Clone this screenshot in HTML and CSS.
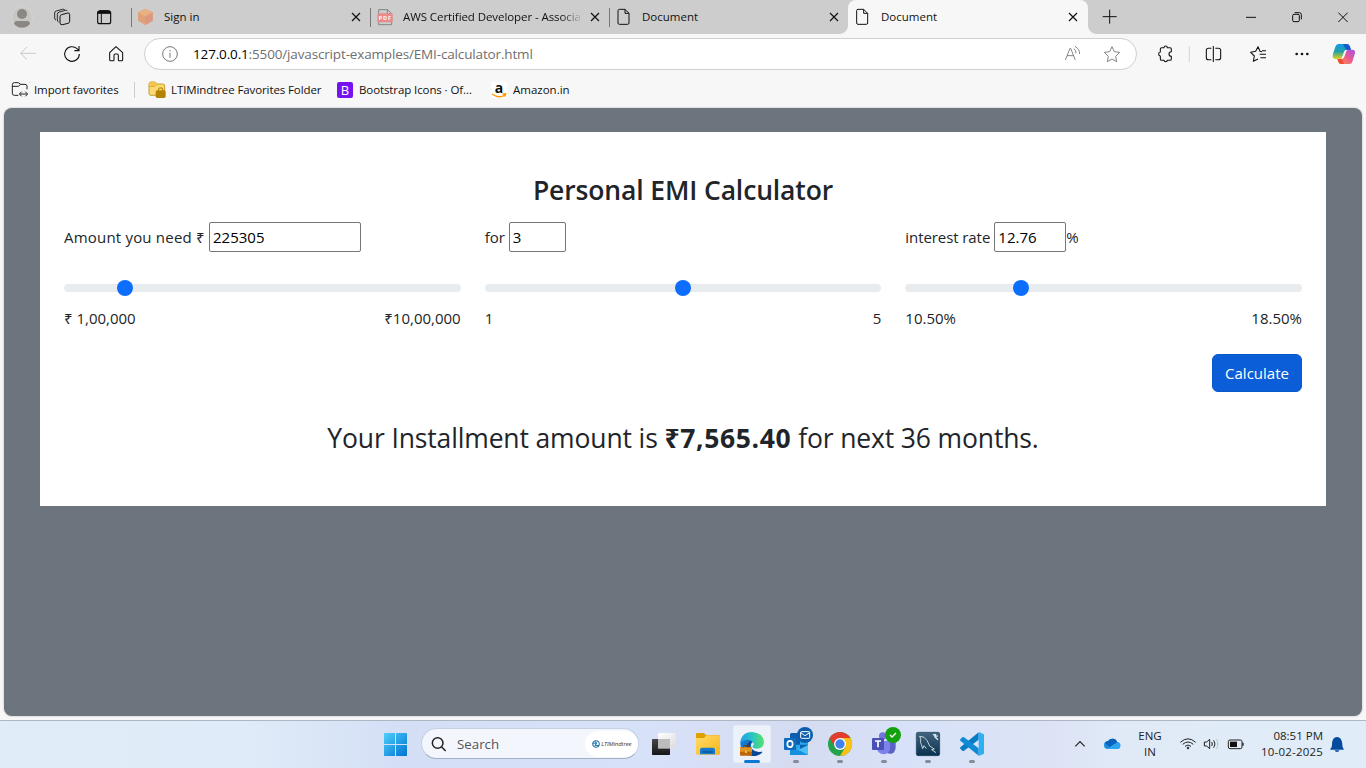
FILE: index.html
```html
<!DOCTYPE html>
<html lang="en">
<head>
<meta charset="utf-8">
<title>Document</title>
<link rel="stylesheet" href="styles.css">
</head>
<body>
<div class="browser">
  <div class="tabstrip">
    <svg class="strip-tools" viewBox="0 0 393 102" fill="none" stroke="#111" stroke-width="3">
      <circle cx="66" cy="51" r="31" fill="#c9c7c4" stroke="#dedad5" stroke-width="2"/>
      <circle cx="66" cy="42" r="15" fill="#8b8783" stroke="none"/>
      <path d="M42 72q0-9 9-9h30q9 0 9 9q-9 11-24 11t-24-11z" fill="#8b8783" stroke="none"/>
      <path d="M180 50q0-5 5-6l18-5q6-1 6 5v20q0 5-5 6l-16 4q-8 1-8-5z"/>
      <path d="M176 66q-4-1-4-6V43q0-5 6-7l18-5q5-1 6 2M168 60q-4-1-4-6V39q0-5 5-6l18-5q5-1 7 1" stroke-width="2.600"/>
      <rect x="293" y="33" width="39" height="38" rx="6" stroke-width="3.500"/>
      <path d="M293 40q0-8 7-8h25q7 0 7 8z" fill="#111"/><path d="M304 40v31"/>
    </svg>
    <div class="tab">
      <svg class="tab-icon" viewBox="413 24 54 54"><path d="M438 26l22 11v25l-22 13-22-13V37z" fill="#e0a07a"/><path d="M438 26l22 11-22 13-22-13z" fill="#e8b184"/><path d="M438 50l22-13v25l-22 13z" fill="#dc9880"/></svg>
      <span class="tab-title">Sign in</span>
      <svg class="close" viewBox="0 0 10 10"><path d="M1 1l8 8M9 1L1 9"/></svg>
    </div>
    <div class="tab">
      <svg class="tab-icon" viewBox="47 24 54 54" fill="none"><path d="M55 40V29h27l12 12v33H55V66" stroke="#858585" stroke-width="3"/><path d="M81 29v13h13" stroke="#858585" stroke-width="3"/><rect x="51" y="40" width="46" height="27" rx="2" fill="#ea8b8b"/><text x="55" y="60" class="pdf-text" textLength="37">PDF</text></svg>
      <span class="tab-title fade">AWS Certified Developer - Associa</span>
      <svg class="close" viewBox="0 0 10 10"><path d="M1 1l8 8M9 1L1 9"/></svg>
    </div>
    <div class="tab">
      <svg class="tab-icon" viewBox="767 24 54 54" fill="none" stroke="#111" stroke-width="3"><path d="M780 28h17l12 12v29q0 4-4 4h-25q-4 0-4-4V32q0-4 4-4zM797 28v12h12"/></svg>
      <span class="tab-title">Document</span>
      <svg class="close" viewBox="0 0 10 10"><path d="M1 1l8 8M9 1L1 9"/></svg>
    </div>
    <div class="tab active">
      <svg class="tab-icon" viewBox="344 24 54 54" fill="none" stroke="#111" stroke-width="3"><path d="M356 28h17l12 12v29q0 4-4 4h-25q-4 0-4-4V32q0-4 4-4zM373 28v12h12"/></svg>
      <span class="tab-title">Document</span>
      <svg class="close" viewBox="0 0 10 10"><path d="M1 1l8 8M9 1L1 9"/></svg>
    </div>
    <svg class="window-tools" viewBox="144 0 834 102" fill="none" stroke="#111" stroke-width="3">
      <path d="M188 50h42M209 29v42M618 52h30M895 38l28 28M923 38l-28 28"/>
      <rect x="758" y="43" width="20" height="22" rx="4"/><path d="M764 38h14q6 0 6 6v14"/>
    </svg>
  </div>

  <div class="toolbar">
    <svg class="tool" viewBox="18 102 132 120" fill="none" stroke="#c9c9c9" stroke-width="3"><path d="M62 160h45M81 141l-19 19 19 19"/></svg>
    <svg class="tool" viewBox="150 102 132 120" fill="none" stroke="#111" stroke-width="3.300"><path d="M238 162a22 22 0 1 1-7-16l6 5M237 138v14h-14"/></svg>
    <svg class="tool" viewBox="282 102 132 120" fill="none" stroke="#111" stroke-width="3.200" stroke-linejoin="round"><path d="M329 158l19-18 20 18v21q0 3-3 3h-8q-2 0-2-3v-13q0-4-4-4h-5q-4 0-4 4v13q0 3-2 3h-8q-3 0-3-3z"/></svg>
    <div class="address">
      <svg class="info" viewBox="486 138 48 48" fill="none" stroke="#777" stroke-width="3"><circle cx="510" cy="162" r="22"/><path d="M510 158v15M510 150v4"/></svg>
      <span class="url"><b>127.0.0.1</b>:5500/javascript-examples/EMI-calculator.html</span>
      <svg class="address-tools" viewBox="60 117 210 90" fill="none" stroke="#777" stroke-width="2.700"><path d="M76 180l14-35h2l14 35M81 167h21M102 146q6 5 6 14M105 139q14 8 14 23"/><path stroke-linejoin="round" d="M216 140l7 15 16 2-12 12 3 16-14-8-14 8 3-16-12-12 16-2z"/></svg>
    </div>
    <svg class="right-tools" viewBox="291 102 687 120" fill="none" stroke="#111" stroke-width="3.200" stroke-linejoin="round">
      <path d="M365 143h7q0-5 5-5t5 5h8q4 0 4 4v8q-7 0-7 7t7 7v8q0 4-4 4h-8q0 4-5 4t-5-4h-7q-4 0-4-4v-9q-5 0-5-6t5-6v-9q0-4 4-4z"/>
      <path d="M448 138v48" stroke="#ccc" stroke-width="2.500"/>
      <path d="M514 145h-9q-6 0-6 6v22q0 6 6 6h9M520 138v48M526 145h9q7 0 7 6v22q0 6-7 6h-9"/>
      <path d="M678 163h-19M678 152h-12M678 173h-17M666 155l-6-1-6-14-7 14-15 3 11 11-3 16 14-7"/>
      <g fill="#111" stroke="none"><circle cx="770" cy="162" r="4"/><circle cx="786" cy="162" r="4"/><circle cx="802" cy="162" r="4"/></g>
      <g stroke="none">
        <defs>
          <linearGradient id="cpa" x1="0" y1="0" x2="0" y2="1"><stop offset="0" stop-color="#1597ed"/><stop offset=".5" stop-color="#20a2a4"/><stop offset="1" stop-color="#e4d31c"/></linearGradient>
          <linearGradient id="cpb" x1="1" y1="0" x2="0" y2="1"><stop offset="0" stop-color="#a44df5"/><stop offset=".5" stop-color="#f05b8b"/><stop offset="1" stop-color="#ff9b45"/></linearGradient>
        </defs>
        <path d="M896 132h24q8 0 10 8l3 9h-12q-7 0-9 7l-5 14q-2 7-9 7h-12q-11-1-7-15l7-22q3-8 9-8z" fill="url(#cpa)"/>
        <path d="M909 132h11q8 0 10 8l3 10h-10q-6 0-8-7z" fill="#1659cc"/>
        <path d="M928 192h-24q-7 0-9-7l-3-8h9q8 0 10-7l6-14q2-7 9-7h12q10 1 6 14l-7 22q-2 7-9 7z" fill="url(#cpb)"/>
        <path d="M892 177h9q6 0 8 6l3 9h-8q-7 0-9-7z" fill="#ef4b35"/>
        <path d="M913 155q2-5 7-5l-7 20q-2 6-8 6z" fill="#f7f7f7"/>
      </g>
    </svg>
  </div>

  <div class="favorites">
    <div class="fav">
      <svg class="fav-icon" viewBox="34 243 54 54" fill="none" stroke="#222" stroke-width="3"><path d="M56 286H44q-6 0-6-6v-26q0-6 6-6h12l7 5h13q6 0 6 6v9M38 259h18l7-6M61 282h21M66 275l-7 7 7 7M77 275l7 7-7 7"/></svg>
      <span>Import favorites</span>
    </div>
    <i class="fav-rule"></i>
    <div class="fav f2">
      <svg class="fav-icon" viewBox="445 246 54 54"><path d="M448 255q0-6 6-6h12l7 6h16q6 0 6 6v22q0 6-6 6h-35q-6 0-6-6z" fill="#fbd974" stroke="#bd8b12" stroke-width="2.500"/><path d="M448 262h18l7-7" fill="none" stroke="#bd8b12" stroke-width="2.500"/><path d="M448 255q0-6 6-6h12l7 6-7 7h-18z" fill="#f6c64b"/><path d="M477 275v-5q0-3 3-3h6q3 0 3 3v5" fill="none" stroke="#a87800" stroke-width="3"/><rect x="468" y="274" width="30" height="23" rx="5" fill="#b58100"/></svg>
      <span>LTIMindtree Favorites Folder</span>
    </div>
    <div class="fav f3">
      <span class="bootstrap">B</span>
      <span>Bootstrap Icons · Of...</span>
    </div>
    <div class="fav f4">
      <span class="amazon">a<svg viewBox="0 0 16 5" fill="none" stroke="#f90" stroke-width="1.400"><path d="M1 1q7 5 13 1M11.500 1l3.200-.2-.9 2.800"/></svg></span>
      <span class="t-amz">Amazon.in</span>
    </div>
  </div>

  <main class="page">
    <section class="card">
      <h1>Personal EMI Calculator</h1>
      <div class="columns">
        <div>
          <div class="field"><label class="l-amount" for="amount">Amount you need ₹</label><input id="amount" class="box i-amount" value="225305"></div>
          <input class="range" type="range" min="100000" max="1000000" value="225305" step="1">
          <div class="limits"><span>₹ 1,00,000</span><span>₹10,00,000</span></div>
        </div>
        <div>
          <div class="field"><label class="l-years" for="years">for</label><input id="years" class="box i-years" value="3"></div>
          <input class="range" type="range" min="1" max="5" value="3">
          <div class="limits"><span>1</span><span>5</span></div>
        </div>
        <div>
          <div class="field"><label class="l-rate" for="rate">interest rate</label><input id="rate" class="box i-rate" value="12.76"><span>%</span></div>
          <input class="range" type="range" min="10.5" max="18.5" step="0.01" value="12.76">
          <div class="limits"><span>10.50%</span><span>18.50%</span></div>
        </div>
      </div>
      <div class="actions"><button class="calculate">Calculate</button></div>
      <p class="result">Your Installment amount is <strong>₹7,565.40</strong> for next 36 months.</p>
    </section>
  </main>
</div>

<footer class="taskbar">
  <svg class="task" viewBox="12 33 132 141"><defs><linearGradient id="win" gradientUnits="userSpaceOnUse" x1="42" y1="69" x2="111" y2="138"><stop offset="0" stop-color="#4fd0fb"/><stop offset="1" stop-color="#0072d2"/></linearGradient></defs><path d="M42 71q0-2 2-2h31v33H42zM78 69h31q2 0 2 2v31H78zM42 105h33v33H44q-2 0-2-2zM78 105h33v31q0 2-2 2H78z" fill="url(#win)"/></svg>
  <div class="search">
    <svg class="lens" viewBox="184 78 48 48" fill="none" stroke="#222" stroke-width="4.500"><circle cx="204" cy="99" r="16"/><path d="M216 111l12 12"/></svg>
    <span class="search-text">Search</span>
    <span class="brand"><svg viewBox="0 0 22 22" fill="none" stroke="#2476ad" stroke-width="3"><circle cx="11" cy="11" r="9"/><path d="M2 9h10l-3 6h10M9 4l4 5"/></svg><span>LTIMindtree</span></span>
  </div>
  <svg class="task" viewBox="6 33 132 141"><defs><linearGradient id="tv" x1="0" y1="0" x2="0" y2="1"><stop offset="0" stop-color="#454646"/><stop offset="1" stop-color="#171717"/></linearGradient><linearGradient id="tw" x1="0" y1="0" x2="1" y2="1"><stop offset="0" stop-color="#fff"/><stop offset="1" stop-color="#dcdcdc"/></linearGradient></defs><rect x="54" y="69" width="53" height="47" rx="2" fill="url(#tw)"/><rect x="36" y="87" width="54" height="48" rx="2" fill="url(#tv)"/><path d="M54 87h36v29H54z" fill="#bcbcbc"/></svg>
  <svg class="task" viewBox="138 33 132 141"><defs><linearGradient id="fo" x1="0" y1="0" x2="1" y2="1"><stop offset="0" stop-color="#ffdc69"/><stop offset="1" stop-color="#f7b51b"/></linearGradient></defs><path d="M168 73q0-4 4-4h18q3 0 5 3l3 3h38q4 0 4 4v20h-72z" fill="#dfa000"/><path d="M168 84h24l8-8h36q4 0 4 4v50q0 4-4 4h-64q-4 0-4-4z" fill="url(#fo)"/><path d="M180 133v-13q0-7 7-7h31q7 0 7 7v13z" fill="#147bd1"/><path d="M191 122h24q4 0 4 3.500t-4 3.500h-24q-4 0-4-3.500t4-3.500z" fill="#0b5caa"/></svg>
  <svg class="task" viewBox="270 33 132 141">
    <defs><linearGradient id="ed" x1="0" y1="0" x2="1" y2="0"><stop offset="0" stop-color="#239be8"/><stop offset=".5" stop-color="#27c5c7"/><stop offset="1" stop-color="#5ce066"/></linearGradient></defs>
    <rect x="279" y="45" width="114" height="114" rx="9" fill="#edf1fa" stroke="#dbe1f0" stroke-width="2"/>
    <path d="M301 100q5-14 20-14 16 1 19 10-9 4-7 15 5 17 23 17 5 0 8-1-10 11-28 11-33-2-35-38z" fill="#1679cc"/>
    <path d="M322 101q6-8 14-7-10 12 0 23 10 11 28 8 4-1 2 3-11 10-28 10-18-4-20-21-1-10 4-16z" fill="#0b4797"/>
    <path d="M300 101q3-34 36-35 34 2 36 31-1 19-22 19-12-1-13-6 6-5 3-12-5-9-18-9-14 1-22 12z" fill="url(#ed)"/>
    <rect x="300" y="112" width="36" height="25" rx="2" fill="#bd6709"/><path d="M300 112h36v13h-36z" fill="#e39427"/><path d="M311 112v-5h14v5" fill="none" stroke="#75420b" stroke-width="3"/><path d="M318 122v7" stroke="#ffc54d" stroke-width="5"/>
    <rect x="312" y="150" width="48" height="9" rx="4.500" fill="#0878d2"/>
  </svg>
  <svg class="task" viewBox="402 33 132 141"><path d="M453 73q0-4 4-4h42q5 0 5 5v56q0 5-5 5h-49v-33z" fill="#28a8ea"/><path d="M453 69h27v35h-30v-31zM480 104h24v28h-24z" fill="#0b5eb0"/><path d="M450 105l27 18 27-18v30h-54z" fill="#1490df"/><path d="M475 119l29-14v30z" fill="#49bff2"/><rect x="432" y="84" width="36" height="36" rx="3" fill="#0f6cbd"/><ellipse cx="450" cy="102" rx="8" ry="9.500" fill="none" stroke="#fff" stroke-width="5"/><circle cx="495" cy="75" r="24" fill="#0b5bab"/><rect x="482" y="65" width="27" height="20" rx="2" fill="none" stroke="#fff" stroke-width="3"/><path d="M482 68l13 9 14-9" fill="none" stroke="#fff" stroke-width="3"/><rect class="run" x="459" y="150" width="18" height="9" rx="4.500"/></svg>
  <svg class="task" viewBox="534 33 132 141"><circle cx="600" cy="102" r="36" fill="#24a14b"/><path d="M600 102L569 84a36 36 0 0 1 62 0z" fill="#e33b2e"/><path d="M600 84h31.500A36 36 0 0 1 600 138l16-27z" fill="#fbc116"/><path d="M569 84l15.500 27L600 102V84z" fill="#e33b2e"/><circle cx="600" cy="102" r="18" fill="#fff"/><circle cx="600" cy="102" r="14" fill="#3f82ee"/><rect class="run" x="591" y="150" width="18" height="9" rx="4.500"/></svg>
  <svg class="task" viewBox="666 33 132 141"><circle cx="728" cy="78" r="11" fill="#7075dc"/><path d="M735 93h32v20q-2 18-16 18t-16-12z" fill="#5c61c5"/><path d="M711 93h39v21q-2 18-19 19-18-1-20-19z" fill="#7b83eb"/><rect x="696" y="84" width="36" height="36" rx="3" fill="#4b50b8"/><path d="M705 93h18M714 93v19" stroke="#fff" stroke-width="5"/><circle cx="759" cy="75" r="24" fill="#13a10e"/><path d="M750 75l6 6 12-12" fill="none" stroke="#fff" stroke-width="4"/><rect class="run" x="723" y="150" width="18" height="9" rx="4.500"/></svg>
  <svg class="task" viewBox="798 33 132 141"><defs><linearGradient id="my" x1="0" y1="0" x2="0" y2="1"><stop offset="0" stop-color="#43647d"/><stop offset="1" stop-color="#09324f"/></linearGradient></defs><rect x="829" y="67" width="70" height="70" rx="5" fill="url(#my)" stroke="#173e5c" stroke-width="2"/><path d="M848 116l-4-13q-4-7-2-11 1-6-3-13 14-1 22 12l8 17 14 9-8 2 13 9M848 116l4-9 7 9" fill="none" stroke="#e1edf2" stroke-width="2.500"/><path d="M879 73l6 3v5l9 8M887 72l-2 7 8-1" fill="none" stroke="#e1edf2" stroke-width="4"/><rect class="run" x="855" y="150" width="18" height="9" rx="4.500"/></svg>
  <svg class="task" viewBox="930 33 132 141"><path d="M1016 67v22l-44 33q-3 2-5 0l-6-6q-2-2 0-4z" fill="#087bc2"/><path d="M961 92q-2-2 0-4l6-6q2-2 5 0l44 33v22z" fill="#0f8bd4"/><path d="M1016 66l16 7v58l-16 7z" fill="#2db0f1"/><rect class="run" x="987" y="150" width="18" height="9" rx="4.500"/></svg>
  <div class="tray">
    <svg class="tray-left" viewBox="66 33 150 141" fill="none"><path d="M76 109l14-14 14 14" stroke="#222" stroke-width="3.500"/><path d="M174 117q-12 0-12-12 0-11 12-12 6-8 15-7 10 1 13 11 9 1 9 10-1 10-11 10z" fill="#168de2"/><path d="M165 98q7-6 9-5 6-8 15-7 10 1 13 11l-22 16z" fill="#0a62bd"/><path d="M171 116l31-19q9 1 9 10-1 10-11 10h-26z" fill="#28a5ed"/></svg>
    <div class="lang"><span>ENG</span><span>IN</span></div>
    <svg class="status" viewBox="384 33 204 141" fill="none" stroke="#222" stroke-width="3"><path d="M391 97q23-21 46 0M398 103q16-14 32 0M405 109q9-8 18 0"/><circle cx="414" cy="114" r="2.500" fill="#222"/><path d="M463 96h7l9-8v28l-9-8h-7zM485 96q4 6 0 12M491 91q8 11 0 22" stroke-linejoin="round"/><path d="M498 87q11 15 0 30" stroke="#bbc5cf"/><rect x="535" y="90" width="41" height="26" rx="5"/><path d="M540 95h21v16h-21z" fill="#111" stroke="none"/><path d="M579 98v9" stroke-width="4"/></svg>
    <div class="clock"><span>08:51 PM</span><span class="date">10-02-2025</span></div>
    <svg class="bell" viewBox="840 33 54 141"><path d="M844 117q5-4 5-12 0-24 15-24t16 24q0 8 4 12v2h-40zM857 121h14q-1 5-7 5t-7-5z" fill="#044a9d"/></svg>
  </div>
</footer>
</body>
</html>
```
FILE: styles.css
```css
* { box-sizing: border-box; }
body { margin: 0; width: 1366px; height: 768px; overflow: hidden; font-family: "Open Sans", "Noto Sans", sans-serif; font-size: 15px; color: #212529; display: flex; flex-direction: column; }
svg { display: block; flex: none; }
.browser { height: 720px; background: #f7f7f7; display: flex; flex-direction: column; }

.tabstrip { height: 34px; background: #cdcdcd; display: flex; }
.strip-tools { width: 131px; height: 34px; }
.tab { width: 239px; height: 34px; display: flex; align-items: center; padding-left: 6px; font-size: 11.500px; color: #111; background: linear-gradient(#777, #777) 0 8px / 1px 19px no-repeat; }
.tab-icon { width: 18px; height: 18px; }
.tab-title { margin-left: 9px; width: 179px; padding-bottom: 2px; white-space: nowrap; }
.fade { letter-spacing: -.08px; -webkit-mask-image: linear-gradient(90deg, #000 158px, transparent 180px); mask-image: linear-gradient(90deg, #000 158px, transparent 180px); }
.close { width: 10px; height: 10px; margin-left: 7.500px; stroke: #111; stroke-width: 1.200; fill: none; }
.active { width: 240px; background: #f7f7f7; border-radius: 8px 8px 0 0; position: relative; }
.active::before, .active::after { content: ""; position: absolute; bottom: 0; width: 8px; height: 8px; }
.active::before { left: -8px; background: radial-gradient(circle at 0 0, transparent 7.500px, #f7f7f7 8px); }
.active::after { right: -8px; background: radial-gradient(circle at 100% 0, transparent 7.500px, #f7f7f7 8px); }
.window-tools { width: 278px; height: 34px; }
.pdf-text { font: 700 16px "Open Sans", sans-serif; fill: #fff; }

.toolbar { height: 40px; display: flex; padding-left: 6px; }
.tool { width: 44px; height: 40px; }
.address { width: 993px; height: 32px; margin: 4px 0 0 6px; border: 1px solid #cfcfcf; border-radius: 16px; background: #fff; display: flex; align-items: center; padding-left: 17px; }
.info { width: 16px; height: 16px; }
.url { margin-left: 15px; flex: 1; font-size: 13.500px; color: #6f6f6f; letter-spacing: -.15px; }
.url b { font-weight: 400; color: #000; }
.address-tools { width: 70px; height: 30px; margin-right: 6px; }
.right-tools { width: 229px; height: 40px; }

.favorites { height: 34px; display: flex; align-items: center; padding: 0 0 2px 11px; font-size: 11.500px; letter-spacing: -.1px; color: #111; white-space: nowrap; }
.fav { display: flex; flex: none; align-items: center; gap: 5px; width: 123px; }
.fav > span { padding-bottom: 1px; }
.fav-icon { width: 18px; height: 18px; }
.fav-rule { width: 1px; height: 16px; background: #ccc; }
.f2 { width: 189px; padding-left: 13px; }
.f3 { width: 166px; padding-left: 13px; gap: 6px; }
.fav > .bootstrap { width: 16px; height: 16px; padding: 0; border-radius: 2px; background: #7612ef; color: #fff; font-size: 13px; line-height: 16px; text-align: center; }
.fav > .amazon { width: 16px; height: 16px; padding: 0; border-radius: 2px; background: #fff; font: 700 14px/11px "Open Sans", sans-serif; text-align: center; }
.amazon svg { width: 16px; height: 5px; }
.f4 { gap: 6px; width: 100px; padding-left: 1px; }
.t-amz { letter-spacing: 0; }

.page { width: 1358px; height: 608px; margin-left: 4px; background: #6c757d; border-radius: 8px; padding: 24px 36px; box-shadow: 0 0 2px #aaa; }
.card { height: 374px; background: #fff; padding: 40px 24px 0; }
h1 { margin: 0 0 14px; height: 36px; line-height: 36px; font-size: 26.500px; letter-spacing: -.13px; font-weight: 600; text-align: center; white-space: nowrap; }
.columns { display: grid; grid-template-columns: repeat(3, 1fr); gap: 24px; }
.field { height: 30px; display: flex; align-items: center; white-space: nowrap; }
.l-amount { width: 145px; letter-spacing: .2px; }
.l-years { width: 24px; }
.l-rate { width: 89px; letter-spacing: -.08px; }
.box { height: 30px; border: 1px solid #767676; border-radius: 2px; padding: 0 3px; font: 15px "Open Sans", sans-serif; color: #000; background: #fff; }
.i-amount { width: 152px; }
.i-years { width: 57px; }
.i-rate { width: 72px; }
.range { -webkit-appearance: none; appearance: none; display: block; width: 100%; height: 16px; margin: 28px 0 0; background: transparent; }
.range::-webkit-slider-runnable-track { height: 8px; border-radius: 4px; background: #e9ecef; }
.range::-webkit-slider-thumb { -webkit-appearance: none; width: 16px; height: 16px; margin-top: -4px; border-radius: 50%; background: #0d6efd; }
.limits { display: flex; justify-content: space-between; height: 24px; line-height: 24px; margin-top: 10px; }
.actions { display: flex; justify-content: flex-end; margin-top: 24px; }
.calculate { width: 90px; height: 38px; padding: 0; border: 1px solid #0a58ca; border-radius: 6px; background: #0b5ed7; color: #fff; font: 15px "Open Sans", sans-serif; white-space: nowrap; }
.result { margin: 27px 0 0; font-size: 26.500px; letter-spacing: -.14px; line-height: 38px; text-align: center; white-space: nowrap; }
.result strong { letter-spacing: .65px; }

.taskbar { height: 48px; border-top: 1px solid #aeb7c3; display: flex; padding-left: 374px; background: linear-gradient(90deg, #e0edf8 0, #dfebf8 250px, #d4dff6 400px, #d7e1f7 650px, #d5dcf2 800px, #d8e2f8 920px, #dce3f5 1050px, #e0eaf7 1120px, #e0edf8 100%); color: #222; }
.task { width: 44px; height: 47px; }
.run { fill: #858b98; }
.search { width: 218px; height: 31px; margin: 7px 3px 0; border: 1px solid #c5d0e5; border-bottom-color: #a3afc5; border-radius: 16px; background: #f3f6fd; display: flex; align-items: center; padding-left: 9px; }
.lens { width: 16px; height: 16px; }
.search-text { width: 129px; margin-left: 10px; font-size: 13.300px; color: #555; }
.brand { width: 53px; height: 26px; border-radius: 13px; background: #fff; display: flex; align-items: center; padding-left: 7px; gap: 1px; font-size: 6px; letter-spacing: -.1px; font-style: italic; color: #333; }
.brand svg { width: 8px; height: 8px; }
.tray { margin-left: auto; display: flex; width: 294px; align-items: center; font-size: 11.500px; }
.tray-left { width: 50px; height: 47px; }
.lang, .clock { display: flex; flex-direction: column; line-height: 16px; white-space: nowrap; padding-bottom: 1px; }
.lang { width: 56px; align-items: center; }
.status { width: 68px; height: 47px; }
.clock { width: 77px; align-items: flex-end; }
.date { letter-spacing: .2px; }
.bell { width: 18px; height: 47px; margin-left: 6px; }
```
